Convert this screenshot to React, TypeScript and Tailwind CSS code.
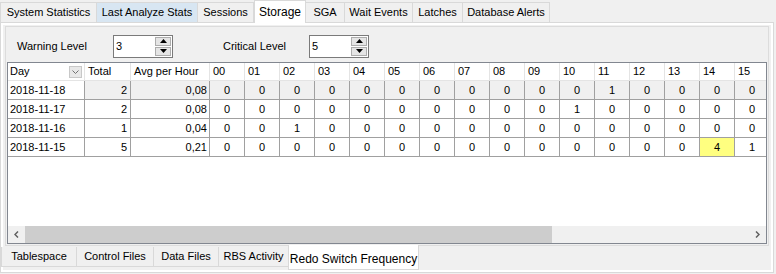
import React from "react";

const topTabs = [
  { label: "System Statistics", w: 97 },
  { label: "Last Analyze Stats", w: 102, hover: true },
  { label: "Sessions", w: 57 },
  { label: "Storage", w: 52, active: true },
  { label: "SGA", w: 40 },
  { label: "Wait Events", w: 69 },
  { label: "Latches", w: 51 },
  { label: "Database Alerts", w: 88 },
];

const bottomTabs = [
  { label: "Tablespace", w: 76 },
  { label: "Control Files", w: 78 },
  { label: "Data Files", w: 66 },
  { label: "RBS Activity", w: 71 },
  { label: "Redo Switch Frequency", w: 131, active: true },
];

const hours = ["00", "01", "02", "03", "04", "05", "06", "07", "08", "09", "10", "11", "12", "13", "14", "15"];

const rows = [
  { day: "2018-11-18", total: 2, avg: "0,08", h: [0, 0, 0, 0, 0, 0, 0, 0, 0, 0, 0, 1, 0, 0, 0, 0], sel: true },
  { day: "2018-11-17", total: 2, avg: "0,08", h: [0, 0, 0, 0, 0, 0, 0, 0, 0, 0, 1, 0, 0, 0, 0, 0] },
  { day: "2018-11-16", total: 1, avg: "0,04", h: [0, 0, 1, 0, 0, 0, 0, 0, 0, 0, 0, 0, 0, 0, 0, 0] },
  { day: "2018-11-15", total: 5, avg: "0,21", h: [0, 0, 0, 0, 0, 0, 0, 0, 0, 0, 0, 0, 0, 0, 4, 1] },
];

const Spinner = ({ value }: { value: string }) => (
  <div className="flex h-[23px] w-[60px] items-center justify-between border border-[#7a7a7a] bg-white pl-[2px] pr-[1px]">
    <span>{value}</span>
    <div className="flex flex-col gap-px">
      {["up", "down"].map((d) => (
        <div key={d} className="flex h-[9px] w-[16px] items-center justify-center border border-[#adadad] bg-[#e5e5e5]">
          <svg width="7" height="4" viewBox="0 0 7 4">
            <path d={d === "up" ? "M0 4 L3.5 0 L7 4 Z" : "M0 0 L3.5 4 L7 0 Z"} fill="#000" />
          </svg>
        </div>
      ))}
    </div>
  </div>
);

export default function App() {
  return (
    <div className="h-[274px] w-[776px] overflow-hidden bg-[#f0f0f0] text-[11px] text-black" style={{ fontFamily: '"Liberation Sans", Arial, sans-serif' }}>
      {/* top tabs */}
      <div className="relative z-10 flex h-[22px] items-end">
        {topTabs.map((t) =>
          t.active ? (
            <div key={t.label} style={{ width: t.w }} className="-mb-px flex h-[23px] items-center justify-center border border-b-0 border-[#d9d9d9] bg-white text-[12px]">
              {t.label}
            </div>
          ) : (
            <div
              key={t.label}
              style={{ width: t.w }}
              className={`-ml-px flex h-[20px] items-center justify-center border border-b-0 border-[#d9d9d9] first:ml-0 ${t.hover ? "bg-[#d8e6f2]" : "bg-[#f0f0f0]"}`}
            >
              {t.label}
            </div>
          )
        )}
      </div>

      {/* outer page */}
      <div className="h-[251px] w-[774px] border border-[#d9d9d9] bg-white p-[2px]">
        <div className="flex h-full flex-col bg-[#f0f0f0] pl-[2px] pr-[2px] pt-px">
          {/* bottom tab page */}
          <div className="flex h-[220px] flex-col border border-[#dcdcdc] bg-[#f0f0f0] pl-px pr-px">
            <div className="flex h-[35px] items-center pt-[3px]">
              <span className="ml-[10px] w-[96px]">Warning Level</span>
              <Spinner value="3" />
              <span className="ml-[50px] w-[86px]">Critical Level</span>
              <Spinner value="5" />
            </div>

            {/* grid */}
            <div className="flex h-[182px] w-[760px] flex-col border border-[#828790] bg-white">
              <div className="flex-1 overflow-hidden">
                <div className="flex h-[18px] w-max border-b border-[#e4e4e4]">
                  <div className="flex w-[77px] items-center justify-between border-r border-[#e4e4e4] pl-[2px] pr-[2px]">
                    <span>Day</span>
                    <div className="flex h-[12px] w-[13px] items-center justify-center border border-[#c8c8c8] bg-[#e8e8e8]">
                      <svg width="7" height="4" viewBox="0 0 7 4">
                        <path d="M0.5 0.5 L3.5 3.5 L6.5 0.5" stroke="#707070" fill="none" />
                      </svg>
                    </div>
                  </div>
                  <div className="flex w-[46px] items-center border-r border-[#e4e4e4] pl-[3px]">Total</div>
                  <div className="flex w-[79px] items-center border-r border-[#e4e4e4] pl-[3px]">Avg per Hour</div>
                  {hours.map((h) => (
                    <div key={h} className="flex w-[35px] items-center border-r border-[#e4e4e4] pl-[3px]">
                      {h}
                    </div>
                  ))}
                </div>
                {rows.map((r) => (
                  <div key={r.day} className={`flex h-[19px] w-max border-b border-[#a0a0a0] ${r.sel ? "bg-[#f0f0f0]" : ""}`}>
                    <div className="flex w-[77px] items-center border-r border-[#a0a0a0] bg-white pl-[2px]">{r.day}</div>
                    <div className="flex w-[46px] items-center justify-end border-r border-[#a0a0a0] pr-[3px]">{r.total}</div>
                    <div className="flex w-[79px] items-center justify-end border-r border-[#a0a0a0] pr-[2px]">{r.avg}</div>
                    {r.h.map((v, i) => (
                      <div
                        key={i}
                        className={`flex w-[35px] items-center justify-center border-r border-[#a0a0a0] ${v === 4 ? "bg-[#ffff80]" : ""}`}
                      >
                        {v}
                      </div>
                    ))}
                  </div>
                ))}
              </div>
              {/* horizontal scrollbar */}
              <div className="flex h-[17px] items-stretch bg-[#f0f0f0]">
                <div className="flex w-[17px] items-center justify-center">
                  <svg width="5" height="7" viewBox="0 0 5 7">
                    <path d="M4 0.5 L1 3.5 L4 6.5" stroke="#606060" strokeWidth="1.5" fill="none" />
                  </svg>
                </div>
                <div className="w-[527px] bg-[#cdcdcd]" />
                <div className="flex-1" />
                <div className="flex w-[17px] items-center justify-center">
                  <svg width="5" height="7" viewBox="0 0 5 7">
                    <path d="M1 0.5 L4 3.5 L1 6.5" stroke="#606060" strokeWidth="1.5" fill="none" />
                  </svg>
                </div>
              </div>
            </div>
          </div>

          {/* bottom tabs */}
          <div className="-ml-[4px] -mt-px flex h-[23px] items-start">
            {bottomTabs.map((t) =>
              t.active ? (
                <div key={t.label} style={{ width: t.w }} className="flex h-[25px] items-center justify-center border border-t-0 border-[#d9d9d9] bg-white pt-[3px] text-[12px]">
                  {t.label}
                </div>
              ) : (
                <div key={t.label} style={{ width: t.w }} className="-mr-px mt-[2px] flex h-[20px] items-center justify-center border border-t-0 border-[#d9d9d9] bg-[#f0f0f0]">
                  {t.label}
                </div>
              )
            )}
          </div>
        </div>
      </div>
    </div>
  );
}
